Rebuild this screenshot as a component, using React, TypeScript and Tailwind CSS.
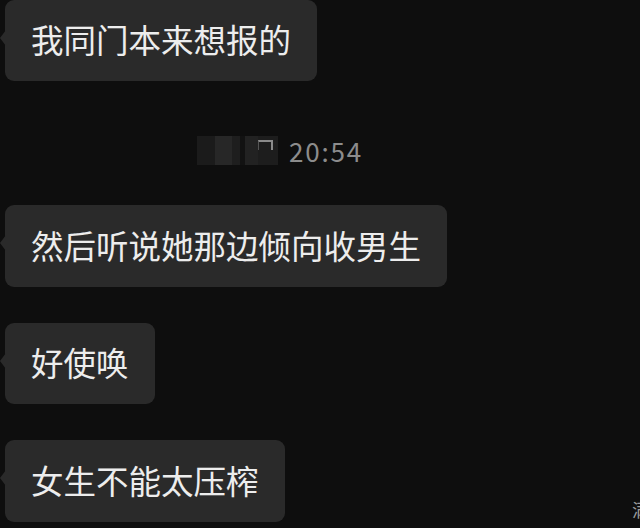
const Bubble = ({ text, height }: { text: string; height: string }) => {
  return (
    <div className="relative self-start">
      <div className="absolute left-[-5px] top-[30px] h-0 w-0 border-y-[8px] border-r-[6px] border-y-transparent border-r-[#2a2a2a]" />
      <div
        className={`flex items-center rounded-[9px] bg-[#2a2a2a] px-[26px] pb-[2px] text-[32.5px] leading-none text-[#ededed] ${height}`}
      >
        {text}
      </div>
    </div>
  );
};

const Timestamp = () => {
  return (
    <div className="ml-[192px] mt-[55px] mb-[40px] flex h-[29px] items-center">
      <div className="flex h-[29px] items-stretch">
        <div className="w-[18px] bg-[#1b1b1b]" />
        <div className="w-[17px] bg-[#272727]" />
        <div className="w-[8px] bg-[#1e1e1e]" />
        <div className="w-[5px] bg-[#121212]" />
        <div className="w-[13px] bg-[#222222]" />
        <div className="relative w-[20px] bg-[#1d1d1d]">
          <div className="absolute left-0 top-[4px] h-[10px] w-[15px] border-t-2 border-r-2 border-l border-[#8a8a8a] border-l-[#555555]" />
        </div>
      </div>
      <span className="ml-[11px] text-[26px] leading-none tracking-[1.8px] text-[#8c8c8c]">20:54</span>
    </div>
  );
};

export default function App() {
  return (
    <div
      className="relative h-[528px] w-[640px] overflow-hidden bg-[#0e0e0e] pl-[5px]"
      style={{ fontFamily: '"Noto Sans CJK SC", "Noto Sans", sans-serif' }}
    >
      <div className="flex flex-col">
        <Bubble text="我同门本来想报的" height="h-[81px]" />
        <Timestamp />
        <Bubble text="然后听说她那边倾向收男生" height="h-[82px]" />
        <div className="h-[36px]" />
        <Bubble text="好使唤" height="h-[81px]" />
        <div className="h-[36px]" />
        <Bubble text="女生不能太压榨" height="h-[82px]" />
      </div>
      <span className="absolute left-[632px] top-[500px] text-[18px] leading-none text-[#9a9a9a]">满</span>
    </div>
  );
}
